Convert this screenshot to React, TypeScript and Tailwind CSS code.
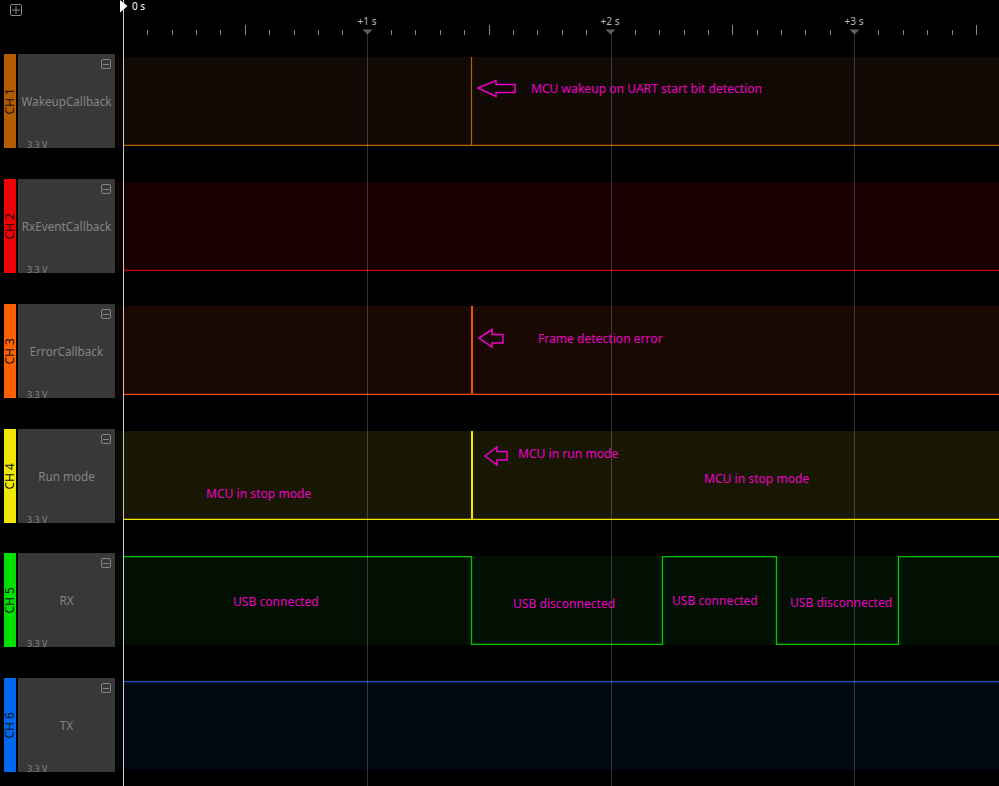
const channels = [
  { id: 1, name: 'WakeupCallback', tab: 'bg-[#b35c00]', bg: 'bg-[#110904]', stroke: '#b86000', edge: 'bottom', pulse: 1, top: 'mt-[3px]', gap: 'mb-[31px]' },
  { id: 2, name: 'RxEventCallback', tab: 'bg-[#f00000]', bg: 'bg-[#180000]', stroke: '#d00000', edge: 'bottom', pulse: 0, top: 'mt-[3px]', gap: 'mb-[31px]' },
  { id: 3, name: 'ErrorCallback', tab: 'bg-[#ff6000]', bg: 'bg-[#190902]', stroke: '#f05000', edge: 'bottom', pulse: 2, top: 'mt-[2px]', gap: 'mb-[31px]' },
  { id: 4, name: 'Run mode', tab: 'bg-[#f0e800]', bg: 'bg-[#181704]', stroke: '#f0e800', edge: 'bottom', pulse: 2, top: 'mt-[2px]', gap: 'mb-[30px]' },
  { id: 5, name: 'RX', tab: 'bg-[#00e000]', bg: 'bg-[#011002]', stroke: '#00c800', edge: 'wave', pulse: 0, top: 'mt-[3px]', gap: 'mb-[31px]' },
  { id: 6, name: 'TX', tab: 'bg-[#0068f0]', bg: 'bg-[#010812]', stroke: '#1058b0', edge: 'top', pulse: 0, top: 'mt-[3px]', gap: '' },
]

const notes = [
  { text: 'MCU wakeup on UART start bit detection', left: 'left-[531px]', top: 'top-[80px]' },
  { text: 'Frame detection error', left: 'left-[538px]', top: 'top-[330px]' },
  { text: 'MCU in run mode', left: 'left-[518px]', top: 'top-[445px]' },
  { text: 'MCU in stop mode', left: 'left-[206px]', top: 'top-[485px]' },
  { text: 'MCU in stop mode', left: 'left-[704px]', top: 'top-[470px]' },
  { text: 'USB connected', left: 'left-[233px]', top: 'top-[593px]' },
  { text: 'USB disconnected', left: 'left-[513px]', top: 'top-[595px]' },
  { text: 'USB connected', left: 'left-[672px]', top: 'top-[592px]' },
  { text: 'USB disconnected', left: 'left-[790px]', top: 'top-[594px]' },
]

const TICK = 24.37

function Ruler() {
  const ticks = Array.from({ length: 36 }, (_, i) => i + 1)
  return (
    <svg width="876" height="54" className="block">
      {ticks.map((n) => {
        const x = Math.round(n * TICK) + 0.5
        if (n % 10 === 0) {
          return <path key={n} d={`M${x - 5} 29.5 h10 l-5 5 z`} fill="#606060" />
        }
        return <line key={n} x1={x} x2={x} y1={n % 5 === 0 ? 25 : 30} y2="35" stroke="#8a8a8a" />
      })}
      {[1, 2, 3].map((s) => (
        <text key={s} x={Math.round(s * 10 * TICK)} y="25" textAnchor="middle" fontSize="10" fill="#b8b8b8">
          +{s} s
        </text>
      ))}
    </svg>
  )
}

function Signal({ stroke, edge, pulse }: { stroke: string; edge: string; pulse: number }) {
  return (
    <svg width="883" height="89" className="block">
      <rect width="7" height="89" fill="#000" fillOpacity="0.45" />
      {edge === 'bottom' && <line x1="7" x2="883" y1="88.4" y2="88.4" stroke={stroke} strokeWidth="1.3" />}
      {edge === 'top' && <line x1="7" x2="883" y1="0.6" y2="0.6" stroke={stroke} strokeWidth="1.3" />}
      {edge === 'wave' && (
        <path d="M7 0.6 H355.5 V88.4 H546.5 V0.6 H660.5 V88.4 H782.5 V0.6 H883" fill="none" stroke={stroke} strokeWidth="1.3" />
      )}
      {pulse > 0 && <line x1={pulse === 2 ? 356 : 355.5} x2={pulse === 2 ? 356 : 355.5} y1="0" y2="89" stroke={stroke} strokeWidth={pulse === 2 ? 2 : 1.2} />}
    </svg>
  )
}

function Channel({ ch }: { ch: (typeof channels)[number] }) {
  return (
    <div className={`${ch.gap} flex h-[94px] pl-1`}>
      <div className={`${ch.tab} flex w-3 items-center justify-center`}>
        <span className="rotate-180 text-[12px] leading-none text-[#111] [writing-mode:vertical-rl]">CH {ch.id}</span>
      </div>
      <div className="relative ml-0.5 flex w-[97px] items-center justify-center bg-[#383838] pt-[2px] text-[11.7px] text-[#858585]">
        {ch.name}
        <span className="absolute top-[5px] right-1 flex size-[10px] items-center justify-center rounded-[2px] border border-[#858585]">
          <span className="h-px w-[6px] bg-[#858585]" />
        </span>
        <span className="absolute -bottom-px left-[9px] text-[9px] leading-[9px] text-[#858585]">3.3 V</span>
      </div>
      <div className={`${ch.bg} ${ch.top} ml-px h-[89px] flex-1`}>
        <Signal stroke={ch.stroke} edge={ch.edge} pulse={ch.pulse} />
      </div>
    </div>
  )
}

export default function App() {
  return (
    <div className="relative h-[786px] w-[999px] overflow-hidden bg-black font-['Noto_Sans',sans-serif]">
      <div className="flex h-[54px]">
        <div className="w-[123px] pt-1 pl-[10px]">
          <span className="flex size-3 items-center justify-center rounded-[2px] border border-[#888]">
            <svg width="8" height="8" viewBox="0 0 8 8">
              <path d="M0 4h8M4 0v8" stroke="#888" />
            </svg>
          </span>
        </div>
        <Ruler />
      </div>

      <div className="flex flex-col">
        {channels.map((ch) => (
          <Channel key={ch.id} ch={ch} />
        ))}
      </div>

      {/* time cursors sit on top of the traces */}
      <div className="absolute top-0 bottom-0 left-[123px] w-px bg-[#c8c8c8]" />
      <div className="absolute top-[34px] bottom-0 left-[367px] w-px bg-white/20" />
      <div className="absolute top-[34px] bottom-0 left-[611px] w-px bg-white/20" />
      <div className="absolute top-[34px] bottom-0 left-[854px] w-px bg-white/20" />

      <svg width="8" height="13" className="absolute top-0 left-[120px]">
        <path d="M0 0 L7.5 6 L0 12.5 z" fill="#fff" />
      </svg>
      <span className="absolute top-0 left-[132px] text-[10px] leading-[12px] text-white">0 s</span>

      <svg width="999" height="786" className="pointer-events-none absolute inset-0" fill="none" stroke="#f000c8" strokeWidth="1.5">
        <path d="M478 88 L496 80.5 V84.5 H515 V92.5 H496 V96.5 Z" />
        <path d="M479 338 L492 329.5 V334.5 H503 V343 H492 V347 Z" />
        <path d="M485 456 L497 447 V451.5 H507 V460 H497 V465 Z" />
      </svg>

      {notes.map((n) => (
        <span key={n.text + n.left} className={`${n.left} ${n.top} absolute text-[12.1px] leading-[18px] whitespace-nowrap text-[#f000c8]`}>
          {n.text}
        </span>
      ))}
    </div>
  )
}
